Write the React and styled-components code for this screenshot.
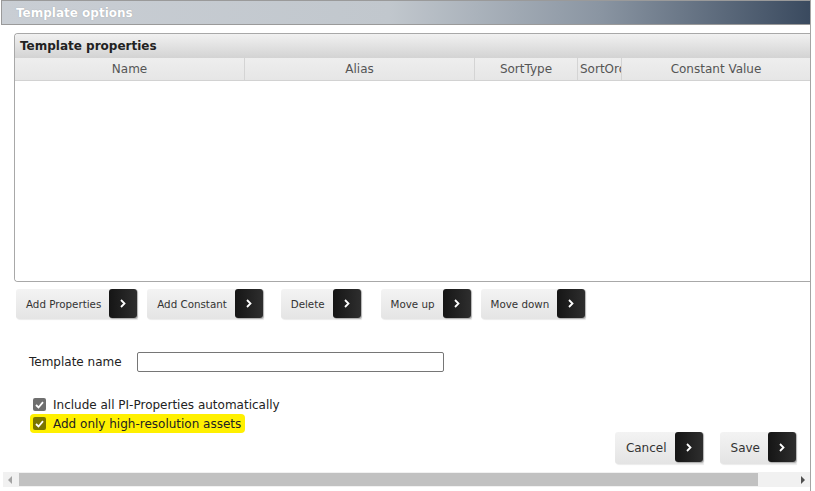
import React from 'react';
import styled, { createGlobalStyle } from 'styled-components';

const GlobalStyle = createGlobalStyle`
  body {
    margin: 0;
    background: #fff;
    font-family: "DejaVu Sans", Verdana, sans-serif;
  }
`;

const columns = [
  { label: 'Name', width: 230 },
  { label: 'Alias', width: 230 },
  { label: 'SortType', width: 103 },
  { label: 'SortOrder', width: 44, clip: true },
  { label: 'Constant Value', width: 189 },
];

const Arrow = () => (
  <svg width="6" height="9" viewBox="0 0 6 9">
    <path d="M1 1 L4.5 4.5 L1 8" fill="none" stroke="#fff" strokeWidth="1.8" />
  </svg>
);

const ArrowButton = ({ label, offset, large }) => (
  <Button $offset={offset} $large={large}>
    <span>{label}</span>
    <ArrowBox $large={large}>
      <Arrow />
    </ArrowBox>
  </Button>
);

const Check = () => (
  <svg width="9" height="8" viewBox="0 0 9 8">
    <path d="M1 4 L3.5 6.5 L8 1.2" fill="none" stroke="#fff" strokeWidth="1.8" />
  </svg>
);

const App = () => (
  <>
    <GlobalStyle />
    <Page>
      <TitleBar>Template options</TitleBar>

      <Panel>
        <PanelHeader>Template properties</PanelHeader>
        <ColumnRow>
          {columns.map((c) => (
            <Column key={c.label} $w={c.width} $clip={c.clip}>
              {c.label}
            </Column>
          ))}
        </ColumnRow>
        <PanelBody />
      </Panel>

      <ButtonRow>
        <ArrowButton label="Add Properties" offset={0} />
        <ArrowButton label="Add Constant" offset={10} />
        <ArrowButton label="Delete" offset={18} />
        <ArrowButton label="Move up" offset={20} />
        <ArrowButton label="Move down" offset={10} />
      </ButtonRow>

      <NameRow>
        <Label>Template name</Label>
        <TextInput type="text" />
      </NameRow>

      <Options>
        <Option>
          <Box $color="#6f6f6f">
            <Check />
          </Box>
          Include all PI-Properties automatically
        </Option>
        <Option $highlight>
          <Box $color="#7a7500">
            <Check />
          </Box>
          Add only high-resolution assets
        </Option>
      </Options>

      <Footer>
        <ArrowButton label="Cancel" offset={0} large />
        <ArrowButton label="Save" offset={17} large />
      </Footer>

      <ScrollBar>
        <ScrollArrow $left />
        <Thumb />
        <ScrollArrow />
      </ScrollBar>
    </Page>
  </>
);

const Page = styled.div`
  width: 811px;
  height: 491px;
  border-right: 1px solid #a4a4a4;
  display: flex;
  flex-direction: column;
  box-sizing: border-box;
  overflow: hidden;
`;

const TitleBar = styled.div`
  height: 25px;
  flex: none;
  box-sizing: border-box;
  margin-left: 1px;
  border: 1px solid #9a9a9a;
  border-right: none;
  background: linear-gradient(
    to right,
    #c9ced4 0%,
    #c1c7cd 48%,
    #8a95a2 74%,
    #3a4a5f 100%
  );
  color: #fff;
  font-weight: bold;
  font-size: 12px;
  padding-left: 14px;
  display: flex;
  align-items: center;
  text-shadow: 0 0 1px rgba(0, 0, 0, 0.25);
`;

const Panel = styled.div`
  margin: 8px 0 0 14px;
  height: 249px;
  flex: none;
  box-sizing: border-box;
  border: 1px solid #a8a8a8;
  border-right: none;
  border-radius: 4px 0 0 4px;
  display: flex;
  flex-direction: column;
  overflow: hidden;
`;

const PanelHeader = styled.div`
  height: 24px;
  background: linear-gradient(to bottom, #f1f1f1, #d3d3d3);
  color: #222;
  font-weight: bold;
  font-size: 12px;
  padding-left: 5px;
  display: flex;
  align-items: center;
`;

const ColumnRow = styled.div`
  height: 23px;
  display: flex;
  background: linear-gradient(to bottom, #eeeeee, #e6e6e6);
  border-bottom: 1px solid #d2d2d2;
  box-sizing: border-box;
`;

const Column = styled.div`
  width: ${(p) => p.$w}px;
  flex: none;
  box-sizing: border-box;
  border-right: 1px solid #d4d4d4;
  color: #555;
  font-size: 12px;
  display: flex;
  align-items: center;
  justify-content: ${(p) => (p.$clip ? 'flex-start' : 'center')};
  padding-left: ${(p) => (p.$clip ? '2px' : '0')};
  overflow: hidden;
  white-space: nowrap;
  &:last-child {
    border-right: none;
    flex: 1;
  }
`;

const PanelBody = styled.div`
  flex: 1;
  background: #fff;
`;

const ButtonRow = styled.div`
  display: flex;
  margin: 7px 0 0 16px;
`;

const Button = styled.div`
  margin-left: ${(p) => p.$offset}px;
  height: ${(p) => (p.$large ? 32 : 30)}px;
  display: flex;
  align-items: center;
  padding-left: ${(p) => (p.$large ? 11 : 10)}px;
  gap: 8px;
  background: linear-gradient(to bottom, #f3f3f3, #e4e4e4);
  box-shadow: 1px 1px 1px rgba(0, 0, 0, 0.08);
  border-radius: 3px 0 0 3px;
  font-size: ${(p) => (p.$large ? 12 : 10.3)}px;
  color: #333;
  white-space: nowrap;
`;

const ArrowBox = styled.div`
  width: 28px;
  height: ${(p) => (p.$large ? 30 : 29)}px;
  align-self: flex-start;
  border-radius: 3px;
  background: linear-gradient(to right, #151515, #2e2e2e);
  box-shadow: 1px 1px 1px rgba(0, 0, 0, 0.25);
  display: flex;
  align-items: center;
  justify-content: center;
`;

const NameRow = styled.div`
  display: flex;
  align-items: center;
  margin: 33px 0 0 29px;
`;

const Label = styled.label`
  width: 108px;
  font-size: 12px;
  color: #222;
`;

const TextInput = styled.input`
  width: 307px;
  height: 20px;
  box-sizing: border-box;
  border: 1px solid #767676;
  border-radius: 2px;
  margin: 0;
  padding: 0 4px;
`;

const Options = styled.div`
  margin: 23px 0 0 30px;
  display: flex;
  flex-direction: column;
  align-items: flex-start;
`;

const Option = styled.div`
  display: flex;
  align-items: center;
  height: 19px;
  padding: 0 4px 0 3px;
  gap: 7px;
  font-size: 12px;
  color: #222;
  border-radius: 4px;
  background: ${(p) => (p.$highlight ? '#fff000' : 'transparent')};
`;

const Box = styled.span`
  width: 13px;
  height: 13px;
  border-radius: 2px;
  background: ${(p) => p.$color};
  display: flex;
  align-items: center;
  justify-content: center;
`;

const Footer = styled.div`
  display: flex;
  justify-content: flex-end;
  margin: -1px 14px 0 0;
  height: 33px;
  align-items: flex-start;
`;

const ScrollBar = styled.div`
  margin: 7px 0 0 3px;
  height: 15px;
  background: #f1f1f1;
  display: flex;
  align-items: center;
`;

const ScrollArrow = styled.span`
  width: 0;
  height: 0;
  margin: 0 5px;
  border-top: 4px solid transparent;
  border-bottom: 4px solid transparent;
  ${(p) =>
    p.$left
      ? 'border-right: 4px solid #a3a3a3;'
      : 'border-left: 4px solid #505050;'}
`;

const Thumb = styled.span`
  flex: 1;
  height: 13px;
  background: #c1c1c1;
  margin: 0 38px 0 2px;
`;

export default App;
